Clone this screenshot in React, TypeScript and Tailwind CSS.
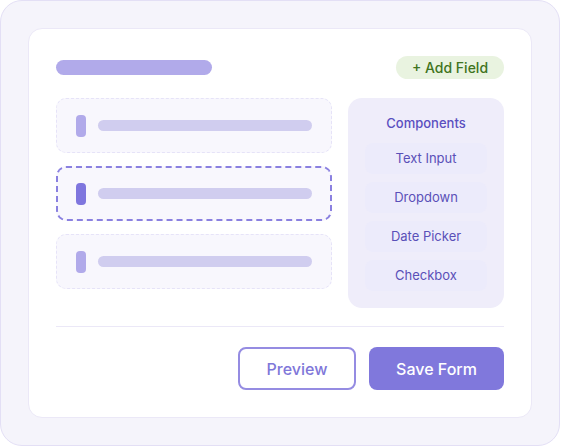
import React from 'react';

const FIELDS = [{ selected: false }, { selected: true }, { selected: false }];
const COMPONENTS = ['Text Input', 'Dropdown', 'Date Picker', 'Checkbox'];

export default function App() {
  return (
    <div
      className="w-[560px] h-[446px] bg-[#f5f4fb] border border-[#e3dff5] rounded-[22px] p-[27px] flex"
      style={{ fontFamily: 'Inter, "Noto Sans", sans-serif' }}
    >
      <div className="flex-1 bg-white border border-[#ebe8f7] rounded-[14px] p-[27px] flex flex-col">
        {/* Header */}
        <div className="flex items-center justify-between h-[23px]">
          <div className="w-[156px] h-[15px] rounded-full bg-[#b1aaea]" />
          <div className="h-[23px] w-[108px] rounded-full bg-[#e9f3e0] text-[#3f7420] text-[14px] font-medium flex items-center justify-center">
            + Add Field
          </div>
        </div>

        {/* Body */}
        <div className="flex gap-4 mt-[19px]">
          <div className="flex-1 flex flex-col gap-[13px]">
            {FIELDS.map((f, i) => (
              <div
                key={i}
                className={
                  f.selected
                    ? 'h-[55px] rounded-[10px] bg-[#f8f7fd] border-2 border-dashed border-[#8a80e0] flex items-center px-[18px] gap-3'
                    : 'h-[55px] rounded-[10px] bg-[#f8f7fd] border border-dashed border-[#e6e3f8] flex items-center px-[19px] gap-3'
                }
              >
                <div
                  className={
                    f.selected
                      ? 'w-[10px] h-[22px] rounded-[4px] bg-[#7f76de]'
                      : 'w-[10px] h-[22px] rounded-[4px] bg-[#b1aaea]'
                  }
                />
                <div className="flex-1 h-[11px] rounded-full bg-[#d0cdef]" />
              </div>
            ))}
          </div>

          <div className="w-[156px] h-[210px] rounded-[14px] bg-[#efedfa] px-[17px] pt-[17px] pb-[16px] flex flex-col">
            <div className="text-center text-[13px] font-medium text-[#5a4fc0] leading-[16px]">Components</div>
            <div className="flex flex-col gap-[8px] mt-[12px]">
              {COMPONENTS.map((c) => (
                <div
                  key={c}
                  className="h-[31px] rounded-[8px] bg-[#ecebfb] flex items-center justify-center text-[13px] text-[#5a50b8]"
                >
                  {c}
                </div>
              ))}
            </div>
          </div>
        </div>

        {/* Divider */}
        <div className="h-px bg-[#ebe8f7] mt-[18px]" />

        {/* Actions */}
        <div className="flex justify-end gap-[13px] mt-[20px]">
          <button className="w-[118px] h-[43px] rounded-[8px] border-2 border-[#958ce2] bg-white text-[#8077d9] text-[16px] font-medium">
            Preview
          </button>
          <button className="w-[135px] h-[43px] rounded-[8px] bg-[#8078dc] text-white text-[16px] font-medium">
            Save Form
          </button>
        </div>
      </div>
    </div>
  );
}
